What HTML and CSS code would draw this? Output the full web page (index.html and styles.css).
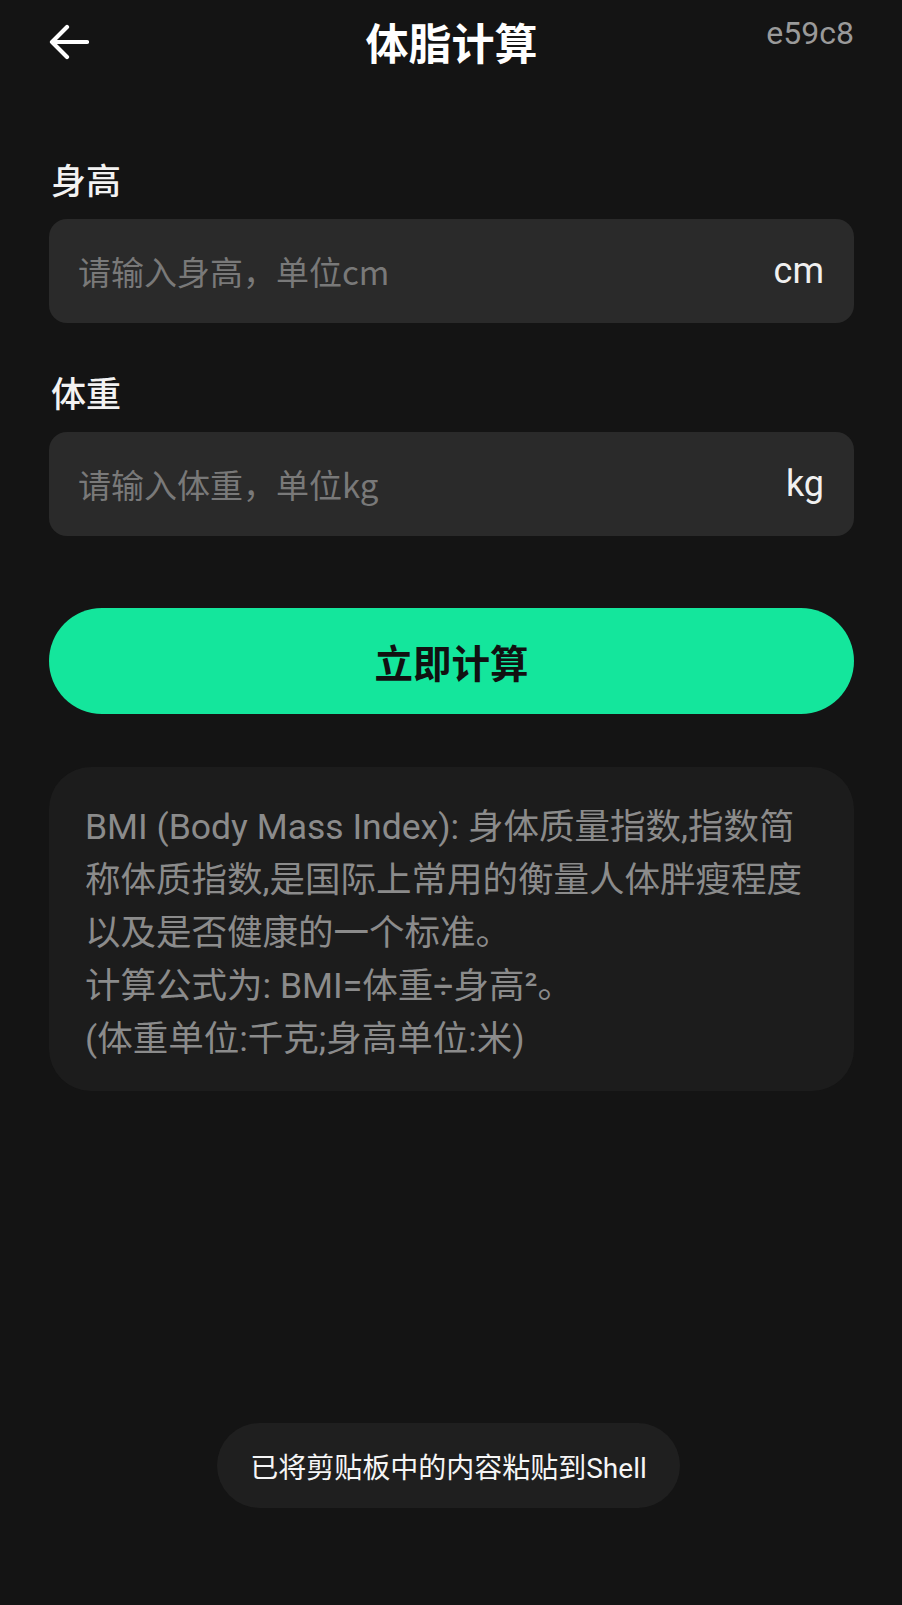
FILE: index.html
```html
<!DOCTYPE html>
<html lang="zh-CN">
<head>
    <meta charset="UTF-8">
    <meta name="viewport" content="width=device-width, initial-scale=1.0">
    <title>体脂计算</title>
    <link rel="stylesheet" href="styles.css">
</head>
<body>
    <div class="topbar">
        <a class="back" href="#">
            <svg width="40" height="36" viewBox="0 0 40 36">
                <path d="M38 18H3M18 3L3 18l15 15" fill="none" stroke="#fff" stroke-width="4.2" stroke-linecap="round" stroke-linejoin="round"/>
            </svg>
        </a>
        <div class="title">体脂计算</div>
        <div class="tag">e59c8</div>
    </div>

    <div class="form">
        <div class="label">身高</div>
        <div class="field">
            <input type="text" placeholder="请输入身高，单位cm">
            <span class="unit">cm</span>
        </div>

        <div class="label">体重</div>
        <div class="field">
            <input type="text" placeholder="请输入体重，单位kg">
            <span class="unit">kg</span>
        </div>

        <button class="calc">立即计算</button>

        <div class="info">
            BMI (Body Mass Index): 身体质量指数,指数简称体质指数,是国际上常用的衡量人体胖瘦程度以及是否健康的一个标准。<br>
            计算公式为: BMI=体重÷身高²。<br>
            (体重单位:千克;身高单位:米)
        </div>
    </div>

    <div class="toast-wrap">
        <div class="toast">已将剪贴板中的内容粘贴到Shell</div>
    </div>
</body>
</html>
```

FILE: styles.css
```css
body {
    margin: 0;
    padding: 0 48px 0 49px;
    background-color: #141414;
    font-family: Roboto, "Noto Sans CJK SC", sans-serif;
    color: #f2f2f2;
    min-height: 1605px;
    box-sizing: border-box;
}
.topbar {
    height: 110px;
    display: grid;
    grid-template-columns: 1fr auto 1fr;
    align-items: start;
}
.back {
    display: block;
    width: 40px;
    margin-top: 24px;
}
.back svg {
    display: block;
}
.title {
    font-family: "Noto Sans CJK SC", sans-serif;
    font-size: 43px;
    font-weight: 700;
    line-height: 56px;
    margin-top: 13px;
    color: #fff;
}
.tag {
    justify-self: end;
    font-size: 32px;
    line-height: 38px;
    margin-top: 14px;
    color: #9a9a9a;
}
.label {
    font-family: "Noto Sans CJK SC", sans-serif;
    font-size: 35px;
    font-weight: 500;
    line-height: 44px;
    margin: 47px 0 18px 2px;
}
.field {
    height: 104px;
    background-color: #2a2a2a;
    border-radius: 18px;
    display: flex;
    align-items: center;
    padding: 0 30px 0 29px;
}
.field input {
    flex: 1;
    min-width: 0;
    background: transparent;
    border: none;
    outline: none;
    padding: 0;
    font-family: "Noto Sans CJK SC", sans-serif;
    font-size: 33px;
    color: #f2f2f2;
}
.field input::placeholder {
    color: #797979;
}
.unit {
    font-size: 36px;
    color: #f0f0f0;
}
.calc {
    display: block;
    width: 100%;
    height: 106px;
    margin-top: 72px;
    border: none;
    border-radius: 53px;
    background-color: #14e69c;
    font-family: "Noto Sans CJK SC", sans-serif;
    font-size: 38.5px;
    font-weight: 700;
    color: #111;
    cursor: pointer;
}
.info {
    margin-top: 53px;
    background-color: #1c1c1c;
    border-radius: 42px;
    padding: 34px 33px 25px 36px;
    font-size: 35.5px;
    line-height: 53px;
    color: #8b8b8b;
}
.toast-wrap {
    position: fixed;
    left: 0;
    right: 5px;
    bottom: 97px;
    display: flex;
    justify-content: center;
}
.toast {
    height: 85px;
    padding: 0 33px;
    display: flex;
    align-items: center;
    background-color: #1f1f1f;
    border-radius: 43px;
    font-size: 28px;
    color: #f5f5f5;
}
```
